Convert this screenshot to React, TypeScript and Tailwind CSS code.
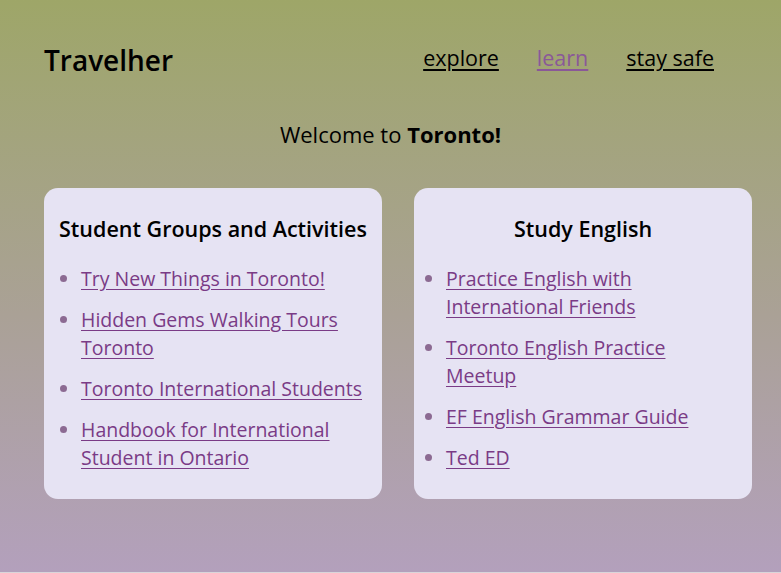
const groups = [
  "Try New Things in Toronto!",
  "Hidden Gems Walking Tours Toronto",
  "Toronto International Students",
  "Handbook for International Student in Ontario",
];

const english = [
  "Practice English with International Friends",
  "Toronto English Practice Meetup",
  "EF English Grammar Guide",
  "Ted ED",
];

function Card({ title, items, listPad }: { title: string; items: string[]; listPad: string }) {
  return (
    <div className="w-[338px] rounded-[14px] bg-[#e6e3f3] pt-[25px] pb-[27px] px-[12px]">
      <h2 className="text-center text-[21.5px] leading-[32px] font-semibold text-black whitespace-nowrap">{title}</h2>
      <ul className={`mt-[20px] list-disc flex flex-col gap-[13px] text-[19.5px] leading-[28px] text-[#7a3b86] marker:text-[#8c6a92] ${listPad}`}>
        {items.map((t) => (
          <li key={t}>
            <a href="#" className="underline underline-offset-[3px]">
              {t}
            </a>
          </li>
        ))}
      </ul>
    </div>
  );
}

export default function App() {
  return (
    <div
      className="min-h-screen bg-gradient-to-b from-[#9ea668] via-[#aaa196] via-[55%] to-[#b3a0bc] border-b border-[#d9d6da]"
      style={{ fontFamily: '"Open Sans", "DejaVu Sans", sans-serif' }}
    >
      <header className="flex items-center justify-between pl-[44px] pr-[67px] pt-[41px]">
        <div className="text-[28px] leading-[38px] font-semibold text-black">Travelher</div>
        <nav className="mb-[4px] flex gap-[38px] text-[21.5px] leading-[30px]">
          <a href="#" className="underline underline-offset-[3px] text-black">explore</a>
          <a href="#" className="underline underline-offset-[3px] text-[#8a5898]">learn</a>
          <a href="#" className="underline underline-offset-[3px] text-black">stay safe</a>
        </nav>
      </header>
      <p className="mt-[40px] text-center text-[22px] leading-[30px] text-black">
        Welcome to <span className="font-bold">Toronto!</span>
      </p>
      <main className="mt-[39px] flex gap-[32px] pl-[44px] pr-[29px] pb-[60px]">
        <Card title="Student Groups and Activities" items={groups} listPad="pl-[25px]" />
        <Card title="Study English" items={english} listPad="pl-[20px] pr-[8px]" />
      </main>
    </div>
  );
}
